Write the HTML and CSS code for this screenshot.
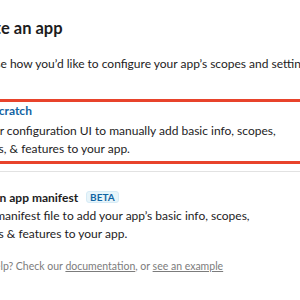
FILE: index.html
```html
<!DOCTYPE html>
<html lang="en">
<head>
  <meta charset="UTF-8">
  <title>Create an app</title>
  <link rel="stylesheet" href="styles.css">
</head>
<body>
  <div class="modal">
    <div class="title">Create an app</div>
    <div class="subtitle">Choose how you’d like to configure your app’s scopes and settings.</div>

    <div class="option selected">
      <div class="option-title">From scratch</div>
      <div class="option-desc">Use our configuration UI to manually add basic info, scopes,<br>settings, &amp; features to your app.</div>
    </div>

    <div class="option">
      <div class="option-title dark">From an app manifest <span class="badge">BETA</span></div>
      <div class="option-desc">Use a manifest file to add your app’s basic info, scopes,<br>settings &amp; features to your app.</div>
    </div>

    <div class="help">Need help? Check our <a href="#">documentation</a>, or <a href="#">see an example</a></div>
  </div>
</body>
</html>
```

FILE: styles.css
```css
body {
  margin: 0;
  background-color: white;
  font-family: Lato, "Open Sans", sans-serif;
  color: #1d1c1d;
  overflow: hidden;
}

.modal {
  width: 420px;
  padding-top: 18px;
}

.title {
  margin-left: -39px;
  font-size: 16.5px;
  font-weight: bold;
  line-height: 20px;
  margin-bottom: 17px;
}

.subtitle {
  margin-left: -33px;
  font-size: 12px;
  line-height: 18px;
  white-space: nowrap;
  margin-bottom: 26px;
}

.option {
  margin-left: -37px;
  font-size: 12px;
  line-height: 18px;
}

.option.selected {
  border-top: 3px solid #e8432b;
  border-bottom: 3px solid #e8432b;
  padding: 0 0 3px;
  margin-bottom: 7px;
}

.option + .option {
  border-top: 1px solid #e2e2e2;
  padding-top: 17px;
}

.option-title {
  font-weight: bold;
  color: #1264a3;
  margin-bottom: 2px;
}

.option-title.dark {
  color: #1d1c1d;
  margin-bottom: 0;
}

.badge {
  display: inline-block;
  background-color: #e8f5fa;
  border: 1px solid #d6ebf6;
  color: #1264a3;
  font-size: 10px;
  line-height: 10px;
  padding: 0 3px;
  border-radius: 3px;
  margin-left: 5px;
  vertical-align: 1px;
}

.help {
  margin-left: -38.5px;
  font-size: 10.5px;
  line-height: 16px;
  color: #7c7c7c;
  margin-top: 15px;
}

.help a {
  color: #7c7c7c;
}
```
